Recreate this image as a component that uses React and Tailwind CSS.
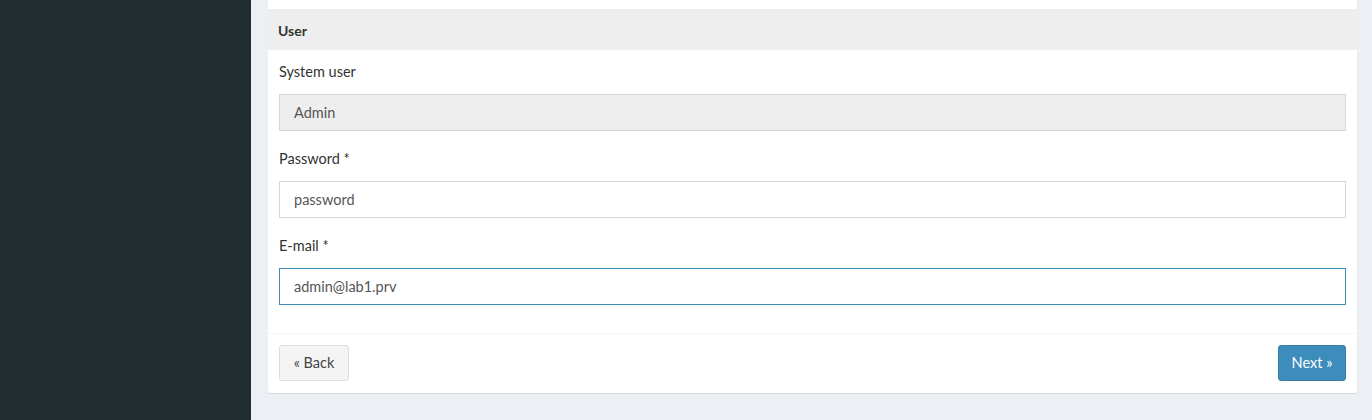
import React from 'react';

const Field = ({ label, value, disabled, focused }) => (
  <div className="mb-[18px] last:mb-0">
    <label className="block h-[20px] leading-[20px] mb-[12px] text-[14.5px] text-[#333]">{label}</label>
    <input
      readOnly
      value={value}
      className={
        'block w-full h-[37px] px-[14px] text-[14.5px] text-[#555] outline-none border ' +
        (disabled ? 'bg-[#eeeeee] border-[#d2d6de]' : focused ? 'bg-white border-[#3c8dbc]' : 'bg-white border-[#d2d6de]')
      }
    />
  </div>
);

export default function App() {
  return (
    <div className="flex h-[420px] w-full overflow-hidden bg-[#ecf0f5]" style={{ fontFamily: 'Lato, "Open Sans", sans-serif' }}>
      <aside className="w-[251px] shrink-0 bg-[#222d32]" />
      <main className="flex-1 pl-[17px] pr-[15px]">
        <div className="bg-white rounded-b-[3px] shadow-[0_1px_1px_rgba(0,0,0,0.1)]">
          <div className="h-[9px]" />
          <div className="h-[41px] bg-[#eeeeee] px-[10px] pt-[2px] flex items-center">
            <span className="text-[14px] font-bold text-[#333]">User</span>
          </div>
          <div className="px-[11px] pt-[12px] pb-[28px]">
            <Field label="System user" value="Admin" disabled />
            <Field label="Password *" value="password" />
            <Field label="E-mail *" value="admin@lab1.prv" focused />
          </div>
          <div className="border-t border-[#f4f4f4] px-[11px] pt-[11px] pb-[12px] flex justify-between">
            <button className="h-[36px] w-[70px] rounded-[3px] bg-[#f4f4f4] border border-[#dddddd] text-[14.5px] text-[#444]">
              « Back
            </button>
            <button className="h-[36px] w-[68px] rounded-[3px] bg-[#3c8dbc] border border-[#367fa9] text-[14.5px] text-white">
              Next »
            </button>
          </div>
        </div>
      </main>
    </div>
  );
}
